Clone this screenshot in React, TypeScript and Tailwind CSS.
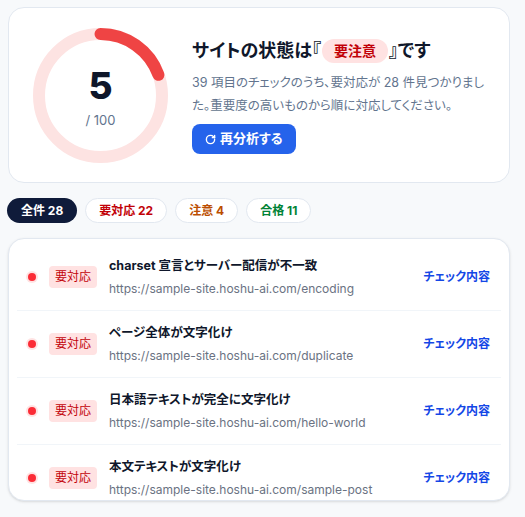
import { RotateCw } from 'lucide-react';

const issues = [
    { title: 'charset 宣言とサーバー配信が不一致', url: 'https://sample-site.hoshu-ai.com/encoding' },
    { title: 'ページ全体が文字化け', url: 'https://sample-site.hoshu-ai.com/duplicate' },
    { title: '日本語テキストが完全に文字化け', url: 'https://sample-site.hoshu-ai.com/hello-world' },
    { title: '本文テキストが文字化け', url: 'https://sample-site.hoshu-ai.com/sample-post' },
];

const ScoreRing = () => {
    const r = 61.5;
    const c = 2 * Math.PI * r;
    return (
        <div className="relative w-[135px] h-[135px] shrink-0">
            <svg width="135" height="135" viewBox="0 0 135 135" className="-rotate-90">
                <circle cx="67.5" cy="67.5" r={r} fill="none" stroke="#fde3e2" strokeWidth="12" />
                <circle
                    cx="67.5"
                    cy="67.5"
                    r={r}
                    fill="none"
                    stroke="#ef4444"
                    strokeWidth="12"
                    strokeLinecap="round"
                    strokeDasharray={`${c * 0.195} ${c}`}
                />
            </svg>
            <div className="absolute inset-0 flex flex-col items-center justify-center">
                <span className="text-[37px] leading-none font-extrabold text-[#0f172a] mt-[2px]">5</span>
                <span className="text-[13px] leading-none text-slate-500 mt-[10px]">/ 100</span>
            </div>
        </div>
    );
};

const App = () => {
    return (
        <div
            className="min-h-screen bg-[#f7f9fb] pt-[7px] pl-2 [font-feature-settings:'palt']"
            style={{ fontFamily: '"Inter", "Noto Sans CJK JP", sans-serif' }}
        >
            <div className="w-[502px] flex flex-col gap-[15px]">
                <div className="bg-white border border-slate-200 rounded-2xl pl-6 pr-4 pt-5 pb-[19px] flex items-center gap-6">
                    <ScoreRing />
                    <div className="flex flex-col mt-[2px]">
                        <h1 className="flex items-center text-[18px] font-bold text-[#0f172a] leading-6">
                            サイトの状態は『
                            <span className="bg-red-100 text-red-700 text-[14px] rounded-full px-[12px] h-6 flex items-center mx-[1px]">要注意</span>
                            』です
                        </h1>
                        <p className="text-[12.5px] leading-[23px] text-slate-500 mt-2 w-[292px]">
                            39 項目のチェックのうち、要対応が 28 件見つかりました。重要度の高いものから順に対応してください。
                        </p>
                        <button className="mt-[7px] self-start h-[30px] px-[13px] bg-[#2563eb] rounded-lg text-white text-[13px] font-bold flex items-center gap-[4px]">
                            <RotateCw size={11} strokeWidth={3} />
                            再分析する
                        </button>
                    </div>
                </div>

                <div className="flex items-center gap-2 -ml-px">
                    <span className="h-[25px] px-[14px] rounded-full bg-[#0f1b3a] text-white text-[12px] font-bold flex items-center">全件 28</span>
                    <span className="h-[25px] px-[13px] rounded-full bg-white border border-slate-200 text-red-700 text-[12px] font-bold flex items-center">要対応 22</span>
                    <span className="h-[25px] px-[13px] rounded-full bg-white border border-slate-200 text-amber-700 text-[12px] font-bold flex items-center">注意 4</span>
                    <span className="h-[25px] px-[13px] rounded-full bg-white border border-slate-200 text-green-700 text-[12px] font-bold flex items-center">合格 11</span>
                </div>

                <div className="bg-white border border-slate-200 rounded-2xl h-[263px] overflow-hidden shadow-sm px-2 pt-[5px]">
                    {issues.map((item, idx) => (
                        <div
                            key={idx}
                            className="flex items-center pl-[11px] pr-[11px] py-3 border-b border-slate-100 last:border-b-0"
                        >
                            <span className="w-2 h-2 rounded-full bg-red-500 ring-2 ring-red-100 shrink-0"></span>
                            <span className="ml-[13px] w-12 h-[22px] rounded bg-red-100 text-red-700 text-[12px] flex items-center justify-center shrink-0">
                                要対応
                            </span>
                            <div className="ml-3 flex-1 min-w-0">
                                <div className="text-[12.5px] leading-5 font-bold text-slate-900">{item.title}</div>
                                <div className="text-[12px] leading-[18px] text-gray-500 mt-1">{item.url}</div>
                            </div>
                            <span className="text-[12px] font-bold text-blue-700">チェック内容</span>
                        </div>
                    ))}
                </div>
            </div>
        </div>
    );
};

export default App;
